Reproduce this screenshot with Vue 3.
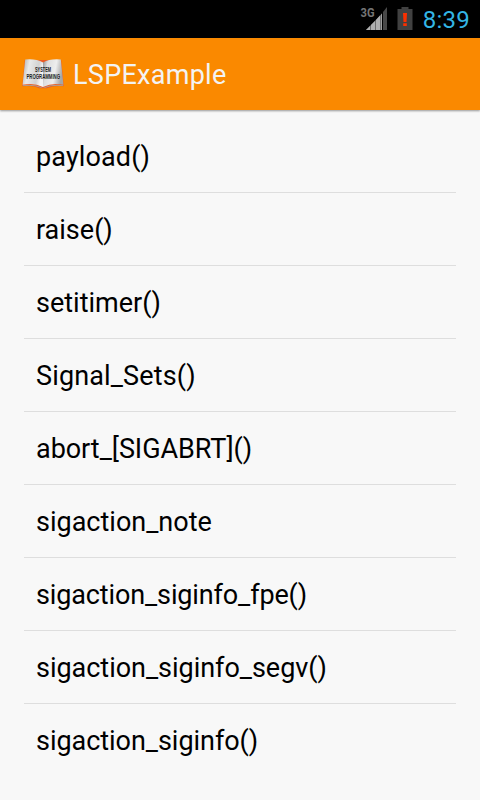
<script setup>
const items = [
  { label: 'payload()', tracking: 0.12 },
  { label: 'raise()', tracking: 0 },
  { label: 'setitimer()', tracking: 0 },
  { label: 'Signal_Sets()', tracking: 0.14 },
  { label: 'abort_[SIGABRT]()', tracking: -0.05 },
  { label: 'sigaction_note', tracking: 0 },
  { label: 'sigaction_siginfo_fpe()', tracking: -0.13 },
  { label: 'sigaction_siginfo_segv()', tracking: -0.03 },
  { label: 'sigaction_siginfo()', tracking: -0.04 },
]
</script>

<template>
  <div class="screen">
    <header class="status">
      <svg class="signal" width="28" height="38" viewBox="0 0 28 38">
        <text class="network" x="0.5" y="16.500" textLength="14" lengthAdjust="spacingAndGlyphs">3G</text>
        <path d="M6 30L22 13.500V30Z" fill="#6c6c6c" />
        <path d="M6 30L10 26V30Z M11 25L15 21V30H11Z M16 20L20 15.500V30H16Z" fill="#b0b0b0" />
        <path d="M21 14.500L22 13.500V30H21Z" fill="#a0a0a0" />
        <path d="M23 12L27 7V30H23Z" fill="#484848" />
      </svg>
      <svg class="battery" width="16" height="38" viewBox="0 0 16 38">
        <path d="M4.500 7H11.500V9H15.500V30H0.500V9H4.500Z" fill="#414141" />
        <path d="M6 13H10L9.500 22H6.500Z M6.200 23.300H9.800V26H6.200Z" fill="#fb3000" />
      </svg>
      <span class="clock">8:39</span>
    </header>

    <div class="bar">
      <svg class="logo" width="44" height="36" viewBox="0 0 44 36">
        <defs>
          <linearGradient id="left" x1="0" x2="1" y1="0" y2="0.25">
            <stop offset="0" stop-color="#a9a9a9" />
            <stop offset="0.35" stop-color="#e9e9e9" />
            <stop offset="0.8" stop-color="#d2d2d2" />
            <stop offset="1" stop-color="#f4f4f4" />
          </linearGradient>
          <linearGradient id="right" x1="0" x2="1" y1="0" y2="0.25">
            <stop offset="0" stop-color="#8e8e8e" />
            <stop offset="0.25" stop-color="#dedede" />
            <stop offset="0.65" stop-color="#eeeeee" />
            <stop offset="1" stop-color="#a6a6a6" />
          </linearGradient>
        </defs>
        <path d="M3.800 4L1.200 30.300Q12 29.500 18 32.300H26Q33 29.500 42.800 30.300L40.200 4Z" fill="#ec5c22" />
        <path d="M1.500 29.300Q13 27.500 22 31.800Q31 27.500 42.500 29.300L42 30.100Q31 29 24 31.800H20Q13 29 2 30.100Z" fill="#a8a39e" />
        <path d="M4.200 3.500Q15 2.500 22 6.500V31Q13 26.500 1.600 28.800Z" fill="url(#left)" />
        <path d="M39.800 3.500Q29 2.500 22 6.500V31Q31 26.500 42.400 28.800Z" fill="url(#right)" />
        <text class="caption" x="14" y="15.700" textLength="16" lengthAdjust="spacingAndGlyphs">SYSTEM</text>
        <text class="caption" x="5.500" y="22.900" textLength="33.500" lengthAdjust="spacingAndGlyphs">PROGRAMMING</text>
      </svg>
      <h1 class="title">LSPExample</h1>
    </div>

    <ul class="list">
      <li
        v-for="item in items"
        :key="item.label"
        class="row"
        :style="{ letterSpacing: item.tracking + 'px' }"
      >{{ item.label }}</li>
    </ul>
  </div>
</template>

<style>
body {
  margin: 0;
  overflow: hidden;
}
</style>

<style scoped>
.screen {
  width: 480px;
  height: 800px;
  overflow: hidden;
  background: #f8f8f8;
  font-family: Roboto, sans-serif;
  color: #000;
}
.status {
  display: flex;
  align-items: center;
  justify-content: flex-end;
  box-sizing: border-box;
  height: 38px;
  padding-right: 10px;
  background: #000;
}
.logo {
  overflow: visible;
}
.battery {
  margin-left: 9px;
}
.network {
  font: 700 12.5px Roboto, sans-serif;
  fill: #757575;
}
.clock {
  margin-left: 10px;
  padding-top: 2px;
  font-size: 24px;
  line-height: 36px;
  letter-spacing: 0.25px;
  color: #33b5e5;
}
.bar {
  display: flex;
  align-items: center;
  box-sizing: border-box;
  height: 72px;
  padding-left: 21px;
  background: #fa8900;
  box-shadow: 0 1px 2px rgba(0, 0, 0, 0.4);
}
.caption {
  font: 700 6.5px "Liberation Sans", sans-serif;
  fill: #1c1c1c;
}
.title {
  margin: 0 0 0 8px;
  padding-top: 2px;
  font-size: 27px;
  font-weight: 400;
  line-height: 72px;
  letter-spacing: 0.28px;
  color: #f3f3f3;
}
.list {
  margin: 0;
  padding: 10px 24px 0;
  list-style: none;
}
.row {
  height: 72px;
  padding-left: 12px;
  font-size: 27px;
  line-height: 75px;
  border-bottom: 1px solid #dedede;
}
.row:last-child {
  border-bottom: 0;
}
</style>
